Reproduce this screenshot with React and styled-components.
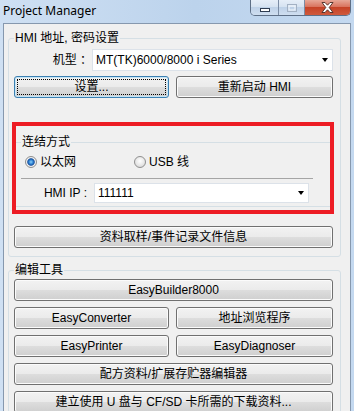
import React from 'react';
import styled, { createGlobalStyle, css } from 'styled-components';

const FONT = `"Liberation Sans", "Noto Sans CJK SC", sans-serif`;

const Global = createGlobalStyle`
  html, body { margin: 0; padding: 0; }
  body { background: #fff; font-family: ${FONT}; }
  * { box-sizing: border-box; }
`;

const Window = styled.div`
  width: 354px;
  height: 411px;
  overflow: hidden;
  display: flex;
  flex-direction: column;
  background: linear-gradient(to right, #cfe0f3 0%, #bcd3ec 55%, #c4d9f0 100%);
`;

const TitleBar = styled.div`
  height: 23px;
  flex: none;
  display: flex;
  align-items: flex-start;
  padding-left: 3px;
`;

const Title = styled.div`
  font: 12px/21px "Noto Sans", sans-serif;
  color: #000;
`;

const Caption = styled.div`
  margin-left: auto;
  margin-right: 3px;
  display: flex;
  height: 16px;
  border: 1px solid #5e6f86;
  border-top: none;
  border-radius: 0 0 5px 5px;
  overflow: hidden;
`;

const CapBtn = styled.div`
  width: ${p => p.$w}px;
  height: 100%;
  display: flex;
  justify-content: center;
  align-items: ${p => p.$align || 'center'};
  padding-bottom: ${p => p.$pb || 0}px;
  background: ${p =>
    p.$close
      ? 'linear-gradient(to bottom, #e7a797 0%, #d9745e 45%, #c64327 50%, #cf5a3d 100%)'
      : 'linear-gradient(to bottom, #e6eef8 0%, #d6e3f1 45%, #bfd2e8 50%, #cfdef0 100%)'};
  & + & {
    border-left: 1px solid #7b8ca4;
  }
`;

const Client = styled.div`
  flex: 1;
  margin: 0 3px;
  background: #f0f0f0;
  border: 1px solid #8698ae;
  border-bottom: none;
  padding: 7px 9px 0 4px;
  display: flex;
  flex-direction: column;
  min-height: 0;
`;

const GroupBox = styled.fieldset`
  margin: ${p => p.$mt || 0}px 0 0 0;
  padding: ${p => p.$pt}px 7px 8px 5px;
  border: 1px solid #d5dfe5;
  border-radius: 3px;
  min-width: 0;
  display: flex;
  flex-direction: column;
`;

const Legend = styled.legend`
  padding: 0 1px;
  margin: 0;
  font: 12px/14px ${FONT};
  color: #000;
`;

const FieldRow = styled.div`
  display: grid;
  grid-template-columns: ${p => p.$label}px 1fr;
  column-gap: ${p => p.$gap || 0}px;
  align-items: center;
  margin-top: ${p => p.$mt || 0}px;
  margin-right: ${p => p.$mr || 0}px;
`;

const Label = styled.div`
  text-align: right;
  font: 12px/14px ${FONT};
  color: #000;
  white-space: pre;
  padding-right: ${p => p.$pr || 0}px;
`;

const Combo = styled.div`
  height: ${p => p.$h}px;
  background: #fff;
  border: 1px solid #dce2e9;
  display: flex;
  align-items: center;
  padding-left: 3px;
  font: 12px/14px ${FONT};
  color: #000;
`;

const Arrow = styled.span`
  margin-left: auto;
  margin-right: 4px;
  width: 0;
  height: 0;
  border-left: 3.5px solid transparent;
  border-right: 3.5px solid transparent;
  border-top: 4px solid #000;
`;

const Btn = styled.button`
  height: 22px;
  margin: 0;
  padding: 0;
  border: 1px solid #707070;
  border-radius: 3px;
  background: linear-gradient(to bottom, #f2f2f2 0%, #ebebeb 48%, #dddddd 52%, #cfcfcf 100%);
  box-shadow: inset 0 0 0 1px #fbfbfb;
  font: 12px/14px ${FONT};
  color: #000;
  position: relative;
  white-space: nowrap;
  ${p =>
    p.$default &&
    css`
      border-color: #3c7fb1;
      box-shadow: inset 0 0 0 1px #c4e5f6;
      &::after {
        content: '';
        position: absolute;
        inset: 2px;
        border: 1px dotted #000;
      }
    `}
`;

const Pair = styled.div`
  display: grid;
  grid-template-columns: 155px 1fr;
  column-gap: 7px;
  margin-top: ${p => p.$mt || 0}px;
`;

const Stack = styled.div`
  display: flex;
  flex-direction: column;
  margin-top: ${p => p.$mt || 0}px;
`;

const Highlight = styled.div`
  margin: 24px -1px 0 -2px;
  border: 4px solid #ed1c24;
  display: flex;
  flex-direction: column;
`;

const InnerGroup = styled.fieldset`
  margin: 9px 0 3px 0;
  padding: 5px 0 3px 5px;
  border: none;
  border-top: 1px solid #d5dfe5;
  border-bottom: 1px solid #d5dfe5;
  min-width: 0;
  display: flex;
  flex-direction: column;
`;

const RadioRow = styled.div`
  display: grid;
  grid-template-columns: 109px auto;
  padding-left: 4px;
  height: 16px;
  align-items: center;
`;

const RadioLabel = styled.label`
  display: flex;
  align-items: center;
  gap: 3px;
  font: 12px/14px ${FONT};
  color: #000;
`;

const RadioDot = styled.span`
  width: 12px;
  height: 12px;
  border-radius: 50%;
  border: 1px solid #8f8f8f;
  flex: none;
  background: radial-gradient(circle at 50% 40%, #ffffff 0%, #e9e9e9 50%, #d2d2d2 100%);
  ${p =>
    p.$checked &&
    css`
      background: radial-gradient(
        circle at 50% 50%,
        #8fd0f7 0px,
        #2f86d6 2px,
        #184f9c 3.3px,
        #f3f3f3 4.2px,
        #e2e2e2 6px
      );
    `}
`;

const Separator = styled.div`
  margin: 8px 17px 0 0;
  height: 1px;
  background: #a5a5a5;
`;

function MinGlyph() {
  return (
    <svg width="10" height="4" viewBox="0 0 10 4">
      <rect x="0.5" y="0.5" width="9" height="3" fill="#fff" stroke="#2f3d52" />
    </svg>
  );
}

function MaxGlyph() {
  return (
    <svg width="10" height="8" viewBox="0 0 10 8">
      <rect x="0.5" y="0.5" width="9" height="7" fill="none" stroke="#a3b1c3" />
      <rect x="2" y="2" width="6" height="4" fill="none" stroke="#f2f6fb" />
    </svg>
  );
}

function CloseGlyph() {
  return (
    <svg width="13" height="11" viewBox="0 0 13 11">
      <path
        d="M1 0.5 H4 L6.5 3.2 L9 0.5 H12 L8.2 5.5 L12 10.5 H9 L6.5 7.8 L4 10.5 H1 L4.8 5.5 Z"
        fill="#fff"
        stroke="#4a2a22"
        strokeWidth="0.9"
        strokeLinejoin="round"
      />
    </svg>
  );
}

export default function App() {
  return (
    <>
      <Global />
      <Window>
        <TitleBar>
          <Title>Project Manager</Title>
          <Caption>
            <CapBtn $w={27} $align="flex-end" $pb={3}>
              <MinGlyph />
            </CapBtn>
            <CapBtn $w={26}>
              <MaxGlyph />
            </CapBtn>
            <CapBtn $w={46} $close>
              <CloseGlyph />
            </CapBtn>
          </Caption>
        </TitleBar>
        <Client>
          <GroupBox $pt={4}>
            <Legend>HMI 地址, 密码设置</Legend>
            <FieldRow $label={78}>
              <Label>机型 ：</Label>
              <Combo $h={22}>
                MT(TK)6000/8000 i Series
                <Arrow />
              </Combo>
            </FieldRow>
            <Pair $mt={5}>
              <Btn $default>设置...</Btn>
              <Btn>重新启动 HMI</Btn>
            </Pair>
            <Highlight>
              <InnerGroup>
                <Legend>连结方式</Legend>
                <RadioRow>
                  <RadioLabel>
                    <RadioDot $checked />
                    以太网
                  </RadioLabel>
                  <RadioLabel>
                    <RadioDot />
                    USB 线
                  </RadioLabel>
                </RadioRow>
                <Separator />
                <FieldRow $label={69} $gap={4} $mt={4} $mr={21}>
                  <Label $pr={3}>HMI IP :</Label>
                  <Combo $h={20}>
                    111111
                    <Arrow />
                  </Combo>
                </FieldRow>
              </InnerGroup>
            </Highlight>
            <Stack $mt={12}>
              <Btn>资料取样/事件记录文件信息</Btn>
            </Stack>
          </GroupBox>
          <GroupBox $mt={6} $pt={2}>
            <Legend>编辑工具</Legend>
            <Stack>
              <Btn>EasyBuilder8000</Btn>
            </Stack>
            <Pair $mt={6}>
              <Btn>EasyConverter</Btn>
              <Btn>地址浏览程序</Btn>
            </Pair>
            <Pair $mt={6}>
              <Btn>EasyPrinter</Btn>
              <Btn>EasyDiagnoser</Btn>
            </Pair>
            <Stack $mt={6}>
              <Btn>配方资料/扩展存贮器编辑器</Btn>
            </Stack>
            <Stack $mt={6}>
              <Btn>建立使用 U 盘与 CF/SD 卡所需的下载资料...</Btn>
            </Stack>
          </GroupBox>
        </Client>
      </Window>
    </>
  );
}
